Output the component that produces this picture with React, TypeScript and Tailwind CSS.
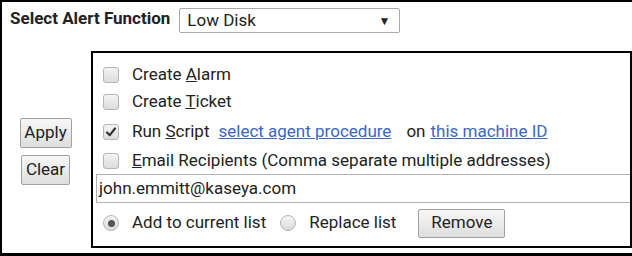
import React from "react";

function Check({ checked }: { checked?: boolean }) {
  return (
    <span className="relative inline-flex h-[16px] w-[16px] shrink-0 items-center justify-center rounded-[3px] border border-[#b5b5b5] bg-gradient-to-b from-[#f4f4f4] to-[#dcdcdc]">
      {checked && (
        <svg viewBox="0 0 12 12" className="h-[12px] w-[12px]">
          <path d="M2 6.5 L4.8 9.2 L10 2.5" fill="none" stroke="#333" strokeWidth="2.2" strokeLinecap="round" strokeLinejoin="round" />
        </svg>
      )}
    </span>
  );
}

function Radio({ checked }: { checked?: boolean }) {
  return (
    <span className="inline-flex h-[16px] w-[16px] shrink-0 items-center justify-center rounded-full border border-[#b5b5b5] bg-gradient-to-b from-[#f6f6f6] to-[#dadada]">
      {checked && <span className="h-[7px] w-[7px] rounded-full bg-[#555]" />}
    </span>
  );
}

function Btn({ children, className = "" }: { children: React.ReactNode; className?: string }) {
  return (
    <button className={`shrink-0 rounded-[2px] border border-[#a0a0a0] bg-gradient-to-b from-[#f7f7f7] to-[#dedede] text-[17px] text-[#222] ${className}`}>
      {children}
    </button>
  );
}

export default function App() {
  return (
    <div
      className="flex h-[256px] w-[632px] flex-col border-b-[3px] border-l-2 border-t-2 border-black bg-white text-[#222]"
      style={{ fontFamily: "Roboto, 'Liberation Sans', sans-serif" }}
    >
      {/* header row */}
      <div className="flex h-[33px] items-end pl-[8px] pb-[2px]">
        <span className="mb-[2px] mr-[9px] whitespace-nowrap text-[17px] font-bold">Select Alert Function</span>
        <div className="flex h-[25px] w-[221px] items-center justify-between rounded-[2px] border border-[#a9a9a9] pl-[7px] pr-[9px] text-[17px]">
          <span>Low Disk</span>
          <span className="text-[12px]">▼</span>
        </div>
      </div>

      <div className="mt-[16px] flex flex-1 pb-[5px]">
        {/* buttons */}
        <div className="flex w-[89px] shrink-0 flex-col items-center justify-center gap-[7px] pt-[4px]">
          <Btn className="h-[30px] w-[52px] -translate-x-[1px]">Apply</Btn>
          <Btn className="h-[30px] w-[49px] -translate-x-[1px]">Clear</Btn>
        </div>

        {/* options box */}
        <div className="flex min-w-0 flex-1 flex-col border-2 border-black pt-[9px] pb-[3px] text-[17px]">
          <div className="flex h-[26px] items-center gap-[13px] pl-[10px]">
            <Check />
            <span>
              Create <u>A</u>larm
            </span>
          </div>
          <div className="flex h-[28px] items-center gap-[13px] pl-[10px]">
            <Check />
            <span>
              Create <u>T</u>icket
            </span>
          </div>
          <div className="flex h-[32px] items-center gap-[13px] pl-[10px]">
            <Check checked />
            <span className="whitespace-nowrap">
              Run <u>S</u>cript
              <a className="ml-[9px] text-[#3a66c7] underline">select agent procedure</a>
              <span className="ml-[15px]">on</span>
              <a className="ml-[5px] text-[#3a66c7] underline">this machine ID</a>
            </span>
          </div>
          <div className="flex h-[26px] items-center gap-[13px] pl-[10px]">
            <Check />
            <span className="whitespace-nowrap">
              <u>E</u>mail Recipients (Comma separate multiple addresses)
            </span>
          </div>
          <div className="ml-[3px] flex h-[29px] items-center border-y border-l border-[#b0b0b0] pl-[2px]">
            john.emmitt@kaseya.com
          </div>
          <div className="flex flex-1 items-center whitespace-nowrap pl-[10px]">
            <Radio checked />
            <span className="ml-[13px]">Add to current list</span>
            <span className="ml-[14px] flex">
              <Radio />
            </span>
            <span className="ml-[13px]">Replace list</span>
            <Btn className="ml-[22px] h-[29px] w-[87px]">Remove</Btn>
          </div>
        </div>
      </div>
    </div>
  );
}
